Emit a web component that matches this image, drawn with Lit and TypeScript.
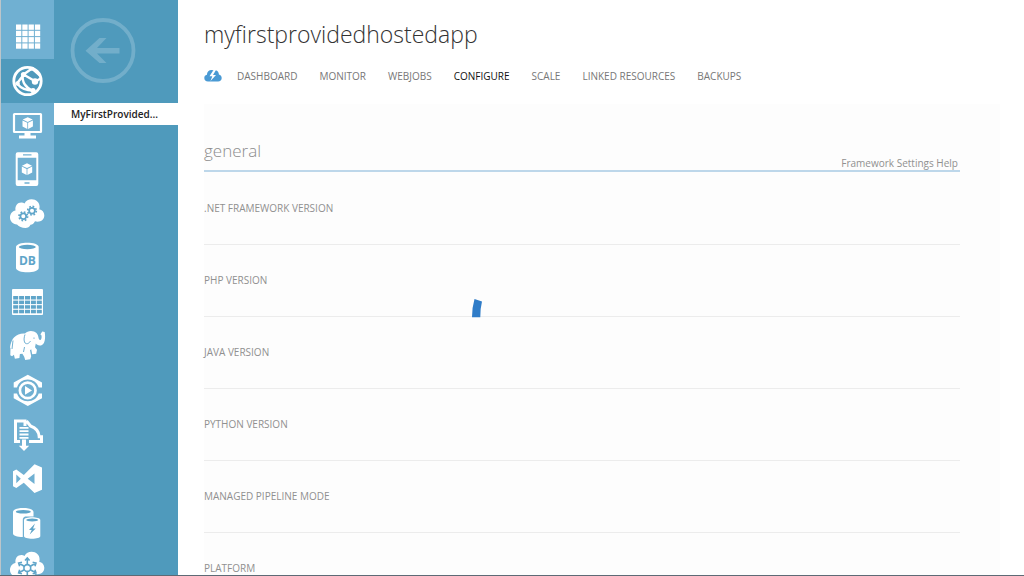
import { LitElement, html, css, svg } from "lit";
import { customElement, state } from "lit/decorators.js";

const cube = (x: number, y: number) => svg`
  <g transform="translate(${x} ${y})">
    <path fill="#fff" d="M0-6 5-3.6 0-1.2-5-3.6Z M-5.2-2.7-.4-.4V5.8L-5.2 3.2Z M5.2-2.7.4-.4V5.8L5.2 3.2Z"/>
  </g>`;

const gear = (x: number, y: number) => svg`
  <g transform="translate(${x} ${y})" fill="none" stroke="#5fa5c9">
    <circle r="2.9" stroke-width="1.8"/>
    <circle r="4.3" stroke-width="1.7" stroke-dasharray="1.7 1.68"/>
  </g>`;

const cloud = svg`<path fill="#fff" d="M8 29.5C3.500 29 1 26 1 22.500c0-3.600 2.400-6.200 5.500-6.900C5.800 11 8.500 7.500 12.500 7.600c1.200 0 2.200.3 3 .8C17 5.700 19.600 4.300 22.600 4.300c4.600 0 8 3.300 8 7.600 0 1-.2 1.700-.4 2.400 3 .6 5.100 3 5.100 6 0 3.900-2.800 6.400-6.800 6.400-.9 0-1.800-.2-2.500-.5-.9 2-2.400 3.300-4.500 3.500-1 2.100-2.900 3.300-5 3.300-3.700 0-6.500-1.500-8.500-3.500Z"/>`;

const glyphs = {
  all: svg`<g fill="#fff">${[0, 1, 2, 3].map((r) =>
    [0, 1, 2, 3].map((c) => svg`<rect x=${7 + c * 6.300} y=${5.500 + r * 6.300} width="5.300" height="5.300"/>`))}</g>`,
  web: svg`<g fill="none" stroke="#fff">
      <circle cx="18.500" cy="18" r="13.700" stroke-width="2.800"/>
      <path stroke-width="2.400" d="M14.500 12 8 20.500M14.500 11.500 26.500 18.500M14.500 11.500 23 5.500M23 5.500 31 12.500M26.500 18.500l5-3M14 12c-1.500 7 3 13 10 16M8.500 21c4 5 9 6.500 15.500 6.500"/>
    </g>
    <g fill="#fff"><circle cx="14.500" cy="11.500" r="2.600"/><circle cx="26" cy="18.500" r="3.200"/><circle cx="8.500" cy="20.500" r="2.300"/><circle cx="24" cy="27.500" r="2.600"/><circle cx="23" cy="5.800" r="2"/></g>`,
  vm: svg`<rect x="5" y="7" width="27" height="18" rx=".5" fill="none" stroke="#fff" stroke-width="2.200"/>
    <path fill="#fff" d="M15.500 25h6v3.500h5.500v3H10v-3h5.500Z"/>${cube(18.700, 16.200)}`,
  mobile: svg`<path fill="#fff" fill-rule="evenodd" d="M8.700 1.300h18.600a2 2 0 0 1 2 2V33a2 2 0 0 1-2 2H8.700a2 2 0 0 1-2-2V3.300a2 2 0 0 1 2-2ZM8.700 6.700V29.200h18.600V6.700ZM14 3.300v1.200h8.500V3.300ZM15.500 31.300v1.500h5v-1.500Z"/>${cube(18, 18.300)}`,
  cloud: svg`${cloud}${gear(14.300, 21.300)}${gear(23, 15.700)}`,
  db: svg`<path fill="#fff" d="M7 7c0-5.700 22.700-5.700 22.700 0v21c0 5.700-22.700 5.700-22.700 0Z"/>
    <ellipse cx="18.300" cy="7" rx="8.500" ry="2.200" fill="#5fa5c9"/>
    <text x="18.400" y="24.500" class="dbtext">DB</text>`,
  table: svg`<rect x="3" y="5" width="31" height="26" rx="1" fill="#fff"/>
    <g fill="#5fa5c9">${[0, 1, 2, 3].map((r) =>
      [0, 1, 2, 3, 4].map((c) => svg`<rect x=${4.200 + c * 5.900} y=${12 + r * 4.600} width="5" height="3.500"/>`))}</g>`,
  elephant: svg`<path fill="#fff" d="M5 9.500C8 6.500 12 5 16 5.500 18 3 22 2.300 25 3.500c2 .8 3.300 2 4 4 .5 2 .8 4.500 2 4.500 1.600 0 1.900-3 1.400-4.800l-1-.7 1.800-3 2.500.6c1 6 .4 12.300-3.700 13.300-2.500.6-4.200-.6-5.200-1.800l-.8 3.700 2 2.500-.8 4-4 .5-1-5-1.200 1 1.200 6-1 3-5 .7-1-3.200-1.800-3-2.500.2-.5 4-4.500.8-1-4-1.800 1.500-1.800-1 .2-7.500C.500 21.500 1.500 13 5 9.500Z"/>
    <path fill="none" stroke="#70b0d2" stroke-width="1" d="M16 6.500c-1 3-1.500 6 0 8.500 2 1.500 4 .5 5.500-2M25 9.500v1.300M4 12.500 3 21M15.500 19l-1 5"/>`,
  media: svg`<path fill="#fff" d="M18.800 2.700 33 10.500V15.500h-3.300C28 10.200 24 7.500 18.800 7.500S9.700 10.200 8 15.500H4.700v-5ZM18.800 34 33 26.200V21.500h-3.300c-1.700 5-5.700 7.700-10.900 7.700S9.700 26.500 8 21.500H4.700v4.700Z"/>
    <circle cx="18.700" cy="18.400" r="7.800" fill="none" stroke="#fff" stroke-width="2.700"/>
    <path fill="#fff" d="M16 14v8.800l7-4.400Z"/>`,
  importer: svg`<path fill="none" stroke="#fff" stroke-width="3" d="M11 24.500H6.500v-20.500h9.500v5M20 24.500h12.500v-4.800h-2.300c-.3-6-4.300-9.200-8.700-10.700l-4-5"/>
    <path fill="#fff" d="M10.500 10h9v1.800h-9ZM10.500 13.300h9v1.800h-9ZM10.500 16.600h9v1.800h-9ZM10.500 19.900h9v1.800h-9ZM13 22.500h4v6.200h3.200L15 34l-5.200-5.300H13Z"/>`,
  vs: svg`<path fill="#fff" fill-rule="evenodd" d="M25.500 3.300 33 6.500v22.300L25.500 32 14.800 21.800 7.300 27 4 25.300V10.200L7.300 8.500l7.500 5.400ZM7.300 13.500v8.700l4.500-4.400ZM25.500 12.500 18.700 17.800l6.800 5.200Z"/>`,
  cache: svg`<path fill="#fff" d="M4 7c0-5.200 20.500-5.200 20.500 0v4.500h-8.300c-1.500.5-2.400 1.500-2.400 3V32C8 32 4 30.500 4 28.500Z"/>
    <ellipse cx="14.300" cy="6.800" rx="7.500" ry="1.800" fill="#5fa5c9"/>
    <path fill="#fff" d="M15 15c0-3.700 16.300-3.700 16.300 0v16c0 3.600-16.300 3.600-16.300 0Z"/>
    <ellipse cx="23.200" cy="15" rx="6" ry="1.400" fill="#5fa5c9"/>
    <path fill="#5fa5c9" d="m26 18.500-6 6.500h2.700l-2 4.500 6-6H24Z"/>`,
  hub: svg`<g transform="translate(0 -1.500)">${cloud}</g>
    <g stroke="#5fa5c9" stroke-width="1.600" fill="none">
      <circle cx="18.300" cy="19" r="3.400"/>
      ${[0, 60, 120, 180, 240, 300].map((a) => svg`<path transform="rotate(${a} 18.300 19)" d="M18.300 15.500V9.500M16 11.500l2.300-2.500 2.300 2.500"/>`)}
    </g>`,
};

type Glyph = keyof typeof glyphs;
interface Service { icon: Glyph; label: string }

const groups: Service[][] = [
  [
    { icon: "web", label: "Web Apps" },
    { icon: "vm", label: "Virtual Machines" },
    { icon: "mobile", label: "Mobile Services" },
    { icon: "cloud", label: "Cloud Services" },
  ],
  [
    { icon: "db", label: "SQL Databases" },
    { icon: "table", label: "Storage" },
    { icon: "elephant", label: "HDInsight" },
    { icon: "media", label: "Media Services" },
  ],
  [
    { icon: "importer", label: "Service Bus" },
    { icon: "vs", label: "Visual Studio Online" },
    { icon: "cache", label: "Cache" },
    { icon: "hub", label: "BizTalk Services" },
  ],
];

const tabs = ["DASHBOARD", "MONITOR", "WEBJOBS", "CONFIGURE", "SCALE", "LINKED RESOURCES", "BACKUPS"];
const settings = [".NET FRAMEWORK VERSION", "PHP VERSION", "JAVA VERSION", "PYTHON VERSION", "MANAGED PIPELINE MODE", "PLATFORM"];

@customElement("service-rail")
class ServiceRail extends LitElement {
  static styles = css`
    :host { display: flex; flex-direction: column; gap: 1px; width: 53px; flex: none; border-left: 1px solid #bcc5ca; background: #70b0d2; overflow: hidden; }
    .home { padding-top: 15px; margin-bottom: -1px; }
    .item { display: flex; align-items: center; justify-content: center; width: 100%; height: 44px; padding: 0; border: 0; background: none; cursor: pointer; }
    .active { background: #4f9abc; }
    .glyph { display: block; width: 37px; height: 36px; flex: none; }
    .dbtext { font: bold 12px "Open Sans", sans-serif; fill: #5fa5c9; text-anchor: middle; }
  `;
  @state() private active: Glyph = "web";

  private item(s: Service) {
    return html`<button class="item ${s.icon === this.active ? "active" : ""}" aria-label=${s.label}
      @click=${() => (this.active = s.icon)}>
      <svg class="glyph" viewBox="0 0 37 36" aria-hidden="true">${glyphs[s.icon]}</svg>
    </button>`;
  }
  render() {
    return html`
      <div class="home">${this.item({ icon: "all", label: "All Items" })}</div>
      ${groups.map((g) => html`<div>${g.map((s) => this.item(s))}</div>`)}
    `;
  }
}

@customElement("app-root")
class AppRoot extends LitElement {
  static styles = css`
    :host { display: flex; box-sizing: border-box; height: 100vh; overflow: hidden; border-bottom: 1px solid #5d6a75; background: #fff; font-family: "Open Sans", "Noto Sans", sans-serif; color: #8c8c8c; }
    .panel { width: 124px; flex: none; background: #4f9abc; }
    .back { display: block; margin: 17px 16px 19px; padding: 0; border: 0; background: none; cursor: pointer; }
    .arrow { display: block; width: 67px; height: 67px; }
    .site { display: block; height: 22px; line-height: 22px; padding-left: 17px; background: #fff; color: #222; font-size: 10px; font-weight: 600; text-decoration: none; white-space: nowrap; }
    .main { flex: 1; min-width: 0; padding: 16px 24px 0 26px; }
    .title { margin: 0; font-size: 23px; line-height: 36px; font-weight: 300; color: #333; }
    .tabs { display: flex; align-items: center; height: 20px; margin-top: 14px; gap: 22px; }
    .azure { width: 18px; height: 14px; margin-right: -7px; flex: none; }
    .tab { font-size: 10px; line-height: 20px; color: #777; text-decoration: none; white-space: nowrap; }
    .current { color: #111; }
    .body { position: relative; margin-top: 18px; padding: 36px 40px 0 0; background: #fdfdfd; }
    .head { display: flex; justify-content: space-between; align-items: flex-end; height: 30px; margin-bottom: 1px; border-bottom: 2px solid #bdd7ea; }
    .section { margin: 0; font-size: 17px; line-height: 24px; padding-bottom: 7px; font-weight: 300; color: #8c8c8c; }
    .help { font-size: 10px; line-height: 14px; padding-right: 2px; color: #909090; text-decoration: none; }
    .row { box-sizing: border-box; height: 72px; padding-top: 27px; border-bottom: 1px solid #ececec; }
    .name { margin: 0; font-size: 10px; line-height: 16px; font-weight: 400; color: #909090; }
    .spinner { position: absolute; left: calc(50% - 131px); top: 194px; width: 12px; height: 20px; }
  `;
  @state() private tab = "CONFIGURE";

  render() {
    return html`
      <service-rail></service-rail>
      <aside class="panel">
        <button class="back" aria-label="Back">
          <svg class="arrow" viewBox="0 0 67 67" aria-hidden="true">
            <circle cx="33" cy="33.500" r="30.500" fill="none" stroke="#72aeca" stroke-width="3.800"/>
            <path fill="#72aeca" d="M15.500 33.800 29.500 21h7l-9.500 10H49.500v5.500H27l9.500 9.500h-7Z"/>
          </svg>
        </button>
        <a class="site" href="#site">MyFirstProvided...</a>
      </aside>
      <main class="main">
        <h1 class="title">myfirstprovidedhostedapp</h1>
        <nav class="tabs">
          <svg class="azure" viewBox="0 0 18 14" aria-hidden="true">
            <path fill="#4a9ad4" d="M4 12.500C1.700 12.500.300 11 .300 9c0-1.700 1-3 2.600-3.300C3 3 5 1 7.500 1l1.700.3C10 1 11 .800 11.700 1.300c2 .5 3.200 2.200 3.200 4.200 1.700.3 2.800 1.700 2.800 3.400 0 2.100-1.500 3.600-3.600 3.600Z"/>
            <path fill="#fff" d="m9.500 1-4 6.200h2.800L6.500 12l5.500-6H9l3-5Z"/>
          </svg>
          ${tabs.map((t) => html`<a class="tab ${t === this.tab ? "current" : ""}" href="#${t.toLowerCase()}"
            @click=${() => (this.tab = t)}>${t}</a>`)}
        </nav>
        <section class="body">
          <div class="head">
            <h2 class="section">general</h2>
            <a class="help" href="#help">Framework Settings Help</a>
          </div>
          ${settings.map((s) => html`<div class="row"><h3 class="name">${s}</h3></div>`)}
          <svg class="spinner" viewBox="0 0 12 20" role="img" aria-label="Loading">
            <path fill="#2f7cc8" d="M3.500 1 11 3.500Q9.300 10 9.300 19.300H1Q1 9.500 3.500 1Z"/>
          </svg>
        </section>
      </main>
    `;
  }
}
